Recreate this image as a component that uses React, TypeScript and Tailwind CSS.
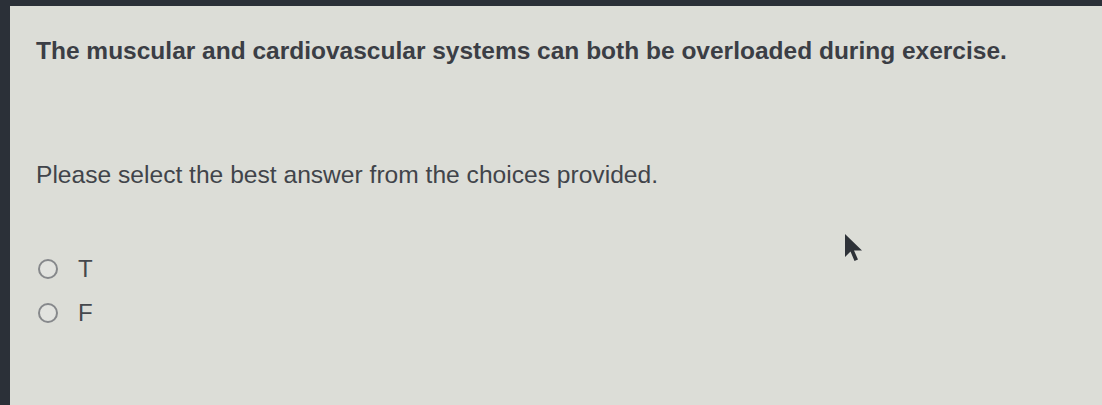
export default function App() {
  return (
    <div className="h-[405px] w-[1102px] overflow-hidden bg-[#2b3038] pt-[6px] pl-[10px]" style={{ fontFamily: '"Liberation Sans", Arial, sans-serif' }}>
      <div className="relative h-full w-full bg-[#dcddd7] pl-[26px] pt-[31px] text-[#3b3e45]">
        <h1 className="text-[24.5px] font-bold leading-[28px]">
          The muscular and cardiovascular systems can both be overloaded during exercise.
        </h1>
        <p className="mt-[96px] text-[24.6px] leading-[28px] text-[#41444a]">
          Please select the best answer from the choices provided.
        </p>
        <div className="mt-[68px] flex flex-col gap-[20px] pl-[2px]">
          {["T", "F"].map((c) => (
            <label key={c} className="flex h-[24px] items-center gap-[20px] text-[24px] leading-[24px] text-[#45484d]">
              <span className="h-[20px] w-[20px] rounded-full border-2 border-[#86888b] bg-[#e2e3df]" />
              <span>{c}</span>
            </label>
          ))}
        </div>
        <svg className="absolute left-[834px] top-[227px]" width="20" height="30" viewBox="0 0 20 30">
          <path d="M1 1 L1 24 L6.5 18.5 L10.5 28 L14 26.5 L10 17.5 L18 17.5 Z" fill="#2e3238" />
        </svg>
      </div>
    </div>
  );
}
